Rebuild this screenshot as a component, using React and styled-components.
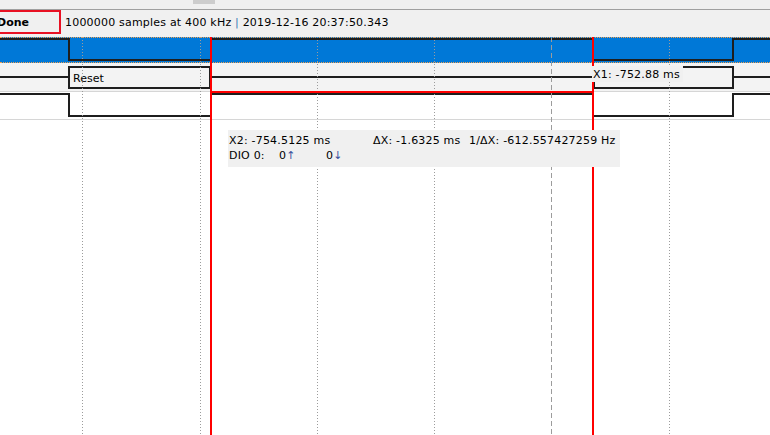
import React from 'react';
import styled, { createGlobalStyle } from 'styled-components';

const GlobalStyle = createGlobalStyle`
  html, body {
    margin: 0;
    padding: 0;
    background: #fff;
  }
  body {
    font-family: "DejaVu Sans", Verdana, sans-serif;
    font-size: 11px;
    letter-spacing: 0.2px;
    color: #000;
    overflow: hidden;
  }
`;

const WIDTH = 770;
const DOTTED = [82, 200, 317, 434, 669];
const DASHED = [551];
const CURSORS = [210, 592];

const Frame = styled.div`
  width: ${WIDTH}px;
  height: 435px;
  display: flex;
  flex-direction: column;
  overflow: hidden;
  background: #fff;
`;

const TopStrip = styled.div`
  flex: none;
  height: 9px;
  background: #f0f0f0;
  border-bottom: 1px solid #a0a0a0;
`;

const Thumb = styled.div`
  margin-left: 193px;
  width: 22px;
  height: 4px;
  background: #cdcdcd;
`;

const StatusBar = styled.div`
  flex: none;
  height: 27px;
  display: flex;
  align-items: flex-start;
  background: #f0f0f0;
  white-space: pre;
`;

const DoneBox = styled.div`
  flex: none;
  margin-left: -35px;
  width: 96px;
  height: 24px;
  box-sizing: border-box;
  border: 2px solid #e81123;
  display: flex;
  align-items: center;
  justify-content: center;
  font-weight: bold;
  letter-spacing: 0;
`;

const Info = styled.div`
  margin-left: 4px;
  height: 24px;
  display: flex;
  align-items: center;
`;

const Pipe = styled.span`
  color: #3c78b4;
`;

const Plot = styled.div`
  position: relative;
  flex: 1;
`;

const Row = styled.div`
  height: ${p => p.h}px;
  background: ${p => p.bg || '#fff'};
  border-bottom: 1px solid #d6d6d6;
  display: flex;
`;

const SelectedRow = styled(Row)`
  background: #0078d7;
  border-top: 1px dotted #f0a050;
  border-bottom: 1px dotted #f0a050;
`;

const Wave = styled.svg`
  display: block;
  flex: none;
`;

const Wire = styled.div`
  flex: none;
  width: ${p => p.w}px;
  display: flex;
  align-items: center;

  &::after {
    content: '';
    width: 100%;
    height: 2px;
    background: #1e1e1e;
  }
`;

const Packet = styled.div`
  flex: none;
  width: ${p => p.w}px;
  height: 23px;
  margin-top: 3px;
  box-sizing: border-box;
  border: 2px solid #1e1e1e;
  padding: 4px 0 0 3px;
  letter-spacing: 0;
`;

const Grid = styled.svg`
  position: absolute;
  left: 0;
  top: 0;
  pointer-events: none;
`;

const Cursor = styled.div`
  position: absolute;
  top: 0;
  bottom: 0;
  left: ${p => p.x}px;
  width: 2px;
  background: #f00;
`;

const SelectionEdge = styled.div`
  position: absolute;
  top: 54px;
  left: 210px;
  width: 384px;
  height: 2px;
  background: #f00;
`;

const CursorLabel = styled.div`
  position: absolute;
  left: 592px;
  top: 29px;
  height: 16px;
  padding: 0 3px 0 1px;
  display: flex;
  align-items: center;
  background: #f0f0f0;
  white-space: pre;
`;

const Measure = styled.div`
  position: absolute;
  left: 228px;
  top: 93px;
  width: 392px;
  height: 37px;
  box-sizing: border-box;
  padding: 3px 0 0 1px;
  background: #f0f0f0;
  display: flex;
  flex-direction: column;
`;

const MeasureLine = styled.div`
  display: flex;
  height: 15px;
  align-items: center;
  white-space: pre;
`;

const Cell = styled.span`
  flex: none;
  width: ${p => (p.w ? `${p.w}px` : 'auto')};
`;

const Edge = styled.span`
  color: #3a4f9c;
`;

const wavePath = (hi, lo, edges, startHigh) => {
  let level = startHigh;
  let d = `M0 ${level ? hi : lo}`;
  edges.forEach(x => {
    level = !level;
    d += ` H${x} V${level ? hi : lo}`;
  });
  return `${d} H${WIDTH}`;
};

const Signal = ({ h, hi, lo, edges, startHigh }) => (
  <Wave width={WIDTH} height={h} viewBox={`0 0 ${WIDTH} ${h}`}>
    <path
      d={wavePath(hi, lo, edges, startHigh)}
      fill="none"
      stroke="#1e1e1e"
      strokeWidth="2"
      strokeLinejoin="miter"
    />
  </Wave>
);

const App = () => (
  <>
    <GlobalStyle />
    <Frame>
      <TopStrip>
        <Thumb />
      </TopStrip>

      <StatusBar>
        <DoneBox>Done</DoneBox>
        <Info>
          1000000 samples at 400 kHz <Pipe>|</Pipe> 2019-12-16 20:37:50.343
        </Info>
      </StatusBar>

      <Plot>
        <SelectedRow h={24}>
          <Signal h={24} hi={1} lo={22} edges={[69, 211, 593, 733]} startHigh />
        </SelectedRow>

        <Row h={28} bg="#f3f3f3">
          <Wire w={68} />
          <Packet w={143}>Reset</Packet>
          <Wire w={382} />
          <Packet w={141} />
          <Wire w={36} />
        </Row>

        <Row h={27}>
          <Signal h={27} hi={2} lo={24} edges={[69, 211, 593, 733]} startHigh />
        </Row>

        <Grid width={WIDTH} height={398}>
          {DOTTED.map(x => (
            <line
              key={x}
              x1={x + 0.5}
              x2={x + 0.5}
              y1="0"
              y2="398"
              stroke="#9c9c9c"
              strokeDasharray="1 2"
            />
          ))}
          {DASHED.map(x => (
            <line
              key={x}
              x1={x + 0.5}
              x2={x + 0.5}
              y1="0"
              y2="398"
              stroke="#9c9c9c"
              strokeDasharray="5 3"
            />
          ))}
        </Grid>

        {CURSORS.map(x => (
          <Cursor key={x} x={x} />
        ))}
        <SelectionEdge />

        <CursorLabel>X1: -752.88 ms</CursorLabel>

        <Measure>
          <MeasureLine>
            <Cell w={144}>X2: -754.5125 ms</Cell>
            <Cell w={96}>ΔX: -1.6325 ms</Cell>
            <Cell>1/ΔX: -612.557427259 Hz</Cell>
          </MeasureLine>
          <MeasureLine>
            <Cell w={50}>DIO 0:</Cell>
            <Cell w={47}>
              0<Edge>↑</Edge>
            </Cell>
            <Cell>
              0<Edge>↓</Edge>
            </Cell>
          </MeasureLine>
        </Measure>
      </Plot>
    </Frame>
  </>
);

export default App;
